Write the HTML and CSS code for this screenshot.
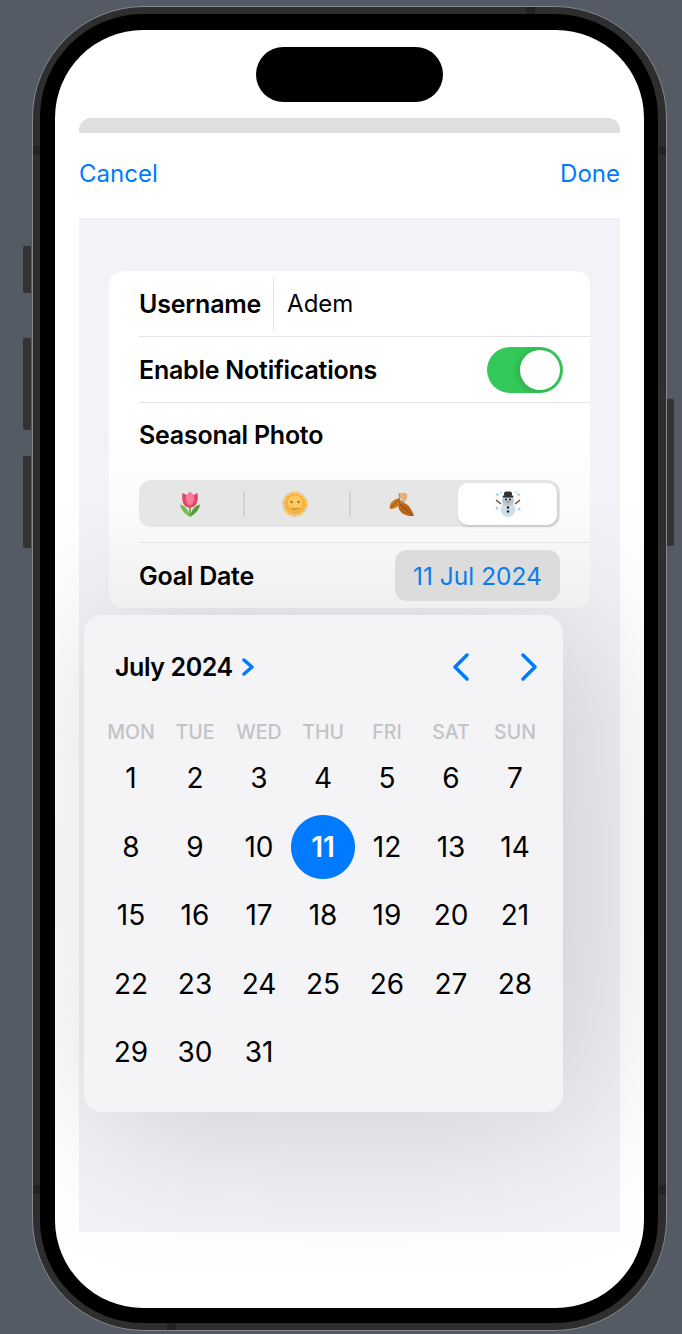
FILE: index.html
```html
<!DOCTYPE html>
<html lang="en">
<head>
    <meta charset="UTF-8">
    <meta name="viewport" content="width=device-width, initial-scale=1.0">
    <link rel="stylesheet" href="styles.css">
    <title>Settings form</title>
</head>
<body>
    <div class="device">
        <span class="sideBtn mute"></span>
        <span class="sideBtn volUp"></span>
        <span class="sideBtn volDown"></span>
        <span class="sideBtn power"></span>
        <span class="band bandLeftTop"></span>
        <span class="band bandRightTop"></span>
        <span class="band bandLeftBottom"></span>
        <span class="band bandRightBottom"></span>
        <span class="band bandTop"></span>
        <span class="band bandBottom"></span>
        <div class="bezel">
            <div class="screen">
                <div class="island"></div>
                <div class="sheetEdge"></div>
                <div class="nav">
                    <a class="navLink">Cancel</a>
                    <a class="navLink">Done</a>
                </div>
                <div class="formArea">
                    <div class="card">
                        <div class="row rowUser">
                            <span class="label">Username</span>
                            <span class="value">Adem</span>
                        </div>
                        <div class="row rowToggle">
                            <span class="label">Enable Notifications</span>
                            <div class="toggle"><span class="knob"></span></div>
                        </div>
                        <div class="row rowSeason">
                            <span class="label">Seasonal Photo</span>
                            <div class="segments">
                                <div class="segment">
                                    <svg class="emoji" viewBox="0 0 30 30">
                                        <path d="M15 27 L15 15" stroke="#5aa33c" stroke-width="1.600"/>
                                        <path d="M15 28 C10.500 25 6 22 5 15.500 C10 16.500 14 21 15 28Z" fill="#74bf4a"/>
                                        <path d="M15 28 C19.500 25 24 22 25 15.500 C20 16.500 16 21 15 28Z" fill="#4f9e3a"/>
                                        <path d="M7.500 4 L11.500 6 L15 3 L18.500 6 L22.500 4 C23.500 11 22.500 18 15 19 C7.500 18 6.500 11 7.500 4Z" fill="#e2476a"/>
                                        <path d="M11.500 6 L15 3 L18.500 6 C20 10 18.500 15.500 15 16.500 C11.500 15.500 10 10 11.500 6Z" fill="#f27f98"/>
                                    </svg>
                                </div>
                                <span class="segDivider"></span>
                                <div class="segment">
                                    <svg class="emoji" viewBox="0 0 30 30">
                                        <circle cx="15" cy="15" r="11.500" fill="none" stroke="#f5b335" stroke-width="2.500" stroke-dasharray="1.300 1.100"/>
                                        <circle cx="15" cy="15" r="10.500" fill="#f7b23e"/>
                                        <circle cx="15" cy="13.500" r="7" fill="#fbcb62"/>
                                        <circle cx="11.500" cy="13" r="1.200" fill="#9a6a2a"/>
                                        <circle cx="18.500" cy="13" r="1.200" fill="#9a6a2a"/>
                                        <path d="M11.500 19 Q15 21.500 18.500 19" fill="none" stroke="#b57a2a" stroke-width="1"/>
                                    </svg>
                                </div>
                                <span class="segDivider"></span>
                                <div class="segment">
                                    <svg class="emoji" viewBox="0 0 30 30">
                                        <path d="M12 4.500 C16 3 19 4 20 5 C21 9 19 12 17 13 C15 10 13 8 12 4.500Z" fill="#e3b176"/>
                                        <path d="M3 20 C1.500 15 6 10 13 9 C15 14 11 20 3 20Z" fill="#c9791f"/>
                                        <path d="M12 13 C20 12 25 20 27 27 C17 28 9 22 12 13Z" fill="#b9651a"/>
                                        <path d="M13 9 C12.500 7 12 6 12 4.500 M12 13 C13 12 14 11.500 17 13 M13 15 L25.500 26.500 M4 19 L12 10" fill="none" stroke="#7d4413" stroke-width=".8"/>
                                    </svg>
                                </div>
                                <div class="segment segmentActive">
                                    <svg class="emoji" viewBox="0 0 30 30">
                                        <path d="M8 15 L3 11 M22 15 L27 11" stroke="#7a4a28" stroke-width="1.500"/>
                                        <circle cx="15" cy="20.500" r="7.500" fill="#cfdee7"/>
                                        <circle cx="15" cy="11.500" r="6" fill="#b7cbd7"/>
                                        <rect x="9.500" y="6.500" width="11" height="2" rx="1" fill="#33302e"/>
                                        <rect x="11" y="2.500" width="8" height="5" rx="2" fill="#33302e"/>
                                        <path d="M14 12 L18 13 L14 14Z" fill="#e26a26"/>
                                        <circle cx="13" cy="10.500" r="1" fill="#222"/>
                                        <circle cx="17" cy="10.500" r="1" fill="#222"/>
                                        <circle cx="15" cy="18.500" r="1.200" fill="#222"/>
                                        <circle cx="15" cy="22.500" r="1.200" fill="#222"/>
                                        <g fill="#a9d3ec">
                                            <circle cx="4.500" cy="5.500" r="1.500"/><circle cx="25.500" cy="5.500" r="1.500"/>
                                            <circle cx="4" cy="19" r="1.500"/><circle cx="26" cy="20" r="1.500"/>
                                            <circle cx="8" cy="3.500" r="1"/><circle cx="23" cy="3" r="1"/>
                                        </g>
                                    </svg>
                                </div>
                            </div>
                        </div>
                        <div class="row rowDate">
                            <span class="label">Goal Date</span>
                            <div class="dateBtn">11 Jul 2024</div>
                        </div>
                    </div>
                </div>
                <div class="picker">
                    <div class="pickerHead">
                        <span class="month">July 2024</span>
                        <svg class="chevSmall" viewBox="0 0 12 18"><path d="M2 2 L10 9 L2 16"/></svg>
                        <div class="pickerNav">
                            <svg class="chevBig" viewBox="0 0 18 28"><path d="M15 2 L3 14 L15 26"/></svg>
                            <svg class="chevBig" viewBox="0 0 18 28"><path d="M3 2 L15 14 L3 26"/></svg>
                        </div>
                    </div>
                    <div class="weekdays">
                        <span>MON</span><span>TUE</span><span>WED</span><span>THU</span><span>FRI</span><span>SAT</span><span>SUN</span>
                    </div>
                    <div class="days">
                        <span>1</span><span>2</span><span>3</span><span>4</span><span>5</span><span>6</span><span>7</span>
                        <span>8</span><span>9</span><span>10</span><span class="today">11</span><span>12</span><span>13</span><span>14</span>
                        <span>15</span><span>16</span><span>17</span><span>18</span><span>19</span><span>20</span><span>21</span>
                        <span>22</span><span>23</span><span>24</span><span>25</span><span>26</span><span>27</span><span>28</span>
                        <span>29</span><span>30</span><span>31</span>
                    </div>
                </div>
            </div>
        </div>
    </div>
</body>
</html>
```

FILE: styles.css
```css
html,body{margin:0;padding:0}
body{width:682px;height:1334px;overflow:hidden;background-color:#545b64;font-family:Inter,"Noto Sans",sans-serif;color:#000}

/* phone frame */
.device{position:relative;box-sizing:border-box;width:635px;height:1325px;margin:6px 0 0 32px;padding:7px 8px 7px 7px;background-color:#2e2e2e;border:1px solid #85888c;border-radius:112px}
.bezel{box-sizing:border-box;height:100%;padding:16px 14px 15px 15px;background-color:#000;border-radius:103px}
.sideBtn{position:absolute;width:8px;background-color:#333;border-radius:2px 0 0 2px;box-shadow:inset 0 1px 0 #555}
.mute{left:-10px;top:238px;height:48px}
.volUp{left:-10px;top:330px;height:93px}
.volDown{left:-10px;top:448px;height:93px}
.power{right:-8px;top:391px;width:7px;height:148px;border-radius:0 2px 2px 0}
.band{position:absolute;background-color:#222}
.bandLeftTop{left:0;top:139px;width:7px;height:9px}
.bandRightTop{right:0;top:139px;width:7px;height:9px}
.bandLeftBottom{left:0;top:1178px;width:7px;height:9px}
.bandRightBottom{right:0;top:1178px;width:7px;height:9px}
.bandTop{left:493px;top:0;width:9px;height:7px}
.bandBottom{left:134px;bottom:0;width:9px;height:7px}

/* screen */
.screen{position:relative;box-sizing:border-box;height:100%;padding:88px 24px 0;background-color:#fff;border-radius:88px;overflow:hidden}
.island{position:absolute;left:201px;top:17px;width:187px;height:55px;background-color:#000;border-radius:28px}
.sheetEdge{height:15px;background-color:#dfdfdf;border-radius:12px 12px 0 0}
.nav{display:flex;justify-content:space-between;height:85px;padding-bottom:5px;box-sizing:border-box;align-items:center}
.navLink{font-size:24px;color:#007aff}

.formArea{height:1014px;padding:53px 30px 0;box-sizing:border-box;background-color:#f2f2f7}
.card{position:relative;z-index:1;height:337px;padding-left:30px;background:linear-gradient(#fff 47%,#fbfbfb 70%,#f0f0f0 100%);border-radius:14px}
.row{display:flex;align-items:center;box-sizing:border-box;border-bottom:1px solid #e4e4e7}
.row:last-child{border-bottom:none}
.label{font-size:25px;font-weight:600;letter-spacing:-.24px}
.rowUser{height:66px}
.value{display:flex;align-items:center;height:54px;margin-left:12px;padding-left:13px;font-size:24px;border-left:1px solid #e4e4e7}
.rowToggle{height:66px;justify-content:space-between;padding-right:27px}
.toggle{display:flex;justify-content:flex-end;box-sizing:border-box;width:76px;height:46px;padding:3px;background-color:#34c759;border-radius:23px}
.knob{width:40px;height:40px;background-color:#fff;border-radius:50%;box-shadow:-2px 1px 6px rgba(0,0,0,.15)}
.rowSeason{display:block;height:140px}
.rowSeason .label{display:block;padding-top:16px;line-height:32px}
.segments{display:grid;grid-template-columns:101px 2px 104px 2px 107px 99px;align-items:center;box-sizing:border-box;width:421px;height:47px;margin-top:29px;padding:3px;background-color:#e6e6e6;border-radius:12px}
.segment{display:flex;align-items:center;justify-content:center;height:41px;padding-right:5px}
.segmentActive{height:42px;padding-right:0;background-color:#fff;border-radius:10px;box-shadow:1px 2px 3px rgba(0,0,0,.14)}
.segDivider{height:26px;background-color:#d2d2d3}
.emoji{width:30px;height:30px}
.rowDate{height:65px;justify-content:space-between;padding-right:30px}
.dateBtn{display:flex;align-items:center;justify-content:center;box-sizing:border-box;width:165px;height:51px;background-color:#dcdcdc;border-radius:12px;font-size:24.500px;color:#0a7be8}

/* date popover */
.picker{position:absolute;left:29px;top:585px;box-sizing:border-box;width:479px;height:497px;padding:0 16px 0 15px;background-color:#f4f4f7;border-radius:18px;box-shadow:20px 5px 170px rgba(0,0,0,.18)}
.pickerHead{display:flex;align-items:center;height:104px;padding:0 9px 0 16px}
.month{font-size:25px;font-weight:600;letter-spacing:-.4px}
.chevSmall{width:12px;height:18px;margin-left:9px}
.chevBig{width:18px;height:28px}
.chevSmall path,.chevBig path{fill:none;stroke:#007aff;stroke-width:3.500;stroke-linecap:round;stroke-linejoin:round}
.pickerNav{display:flex;gap:50px;margin-left:auto}
.weekdays,.days{display:grid;grid-template-columns:repeat(7,64px)}
.weekdays{height:25px;align-items:center;text-align:center;font-size:19.500px;font-weight:500;color:#c3c3c6}
.days{grid-auto-rows:68.500px;font-size:28px;text-align:center}
.days span{display:flex;align-items:center;justify-content:center}
.days .today{color:#fff;font-weight:600;background:radial-gradient(circle,#007aff 31.500px,transparent 32.500px)}
```
